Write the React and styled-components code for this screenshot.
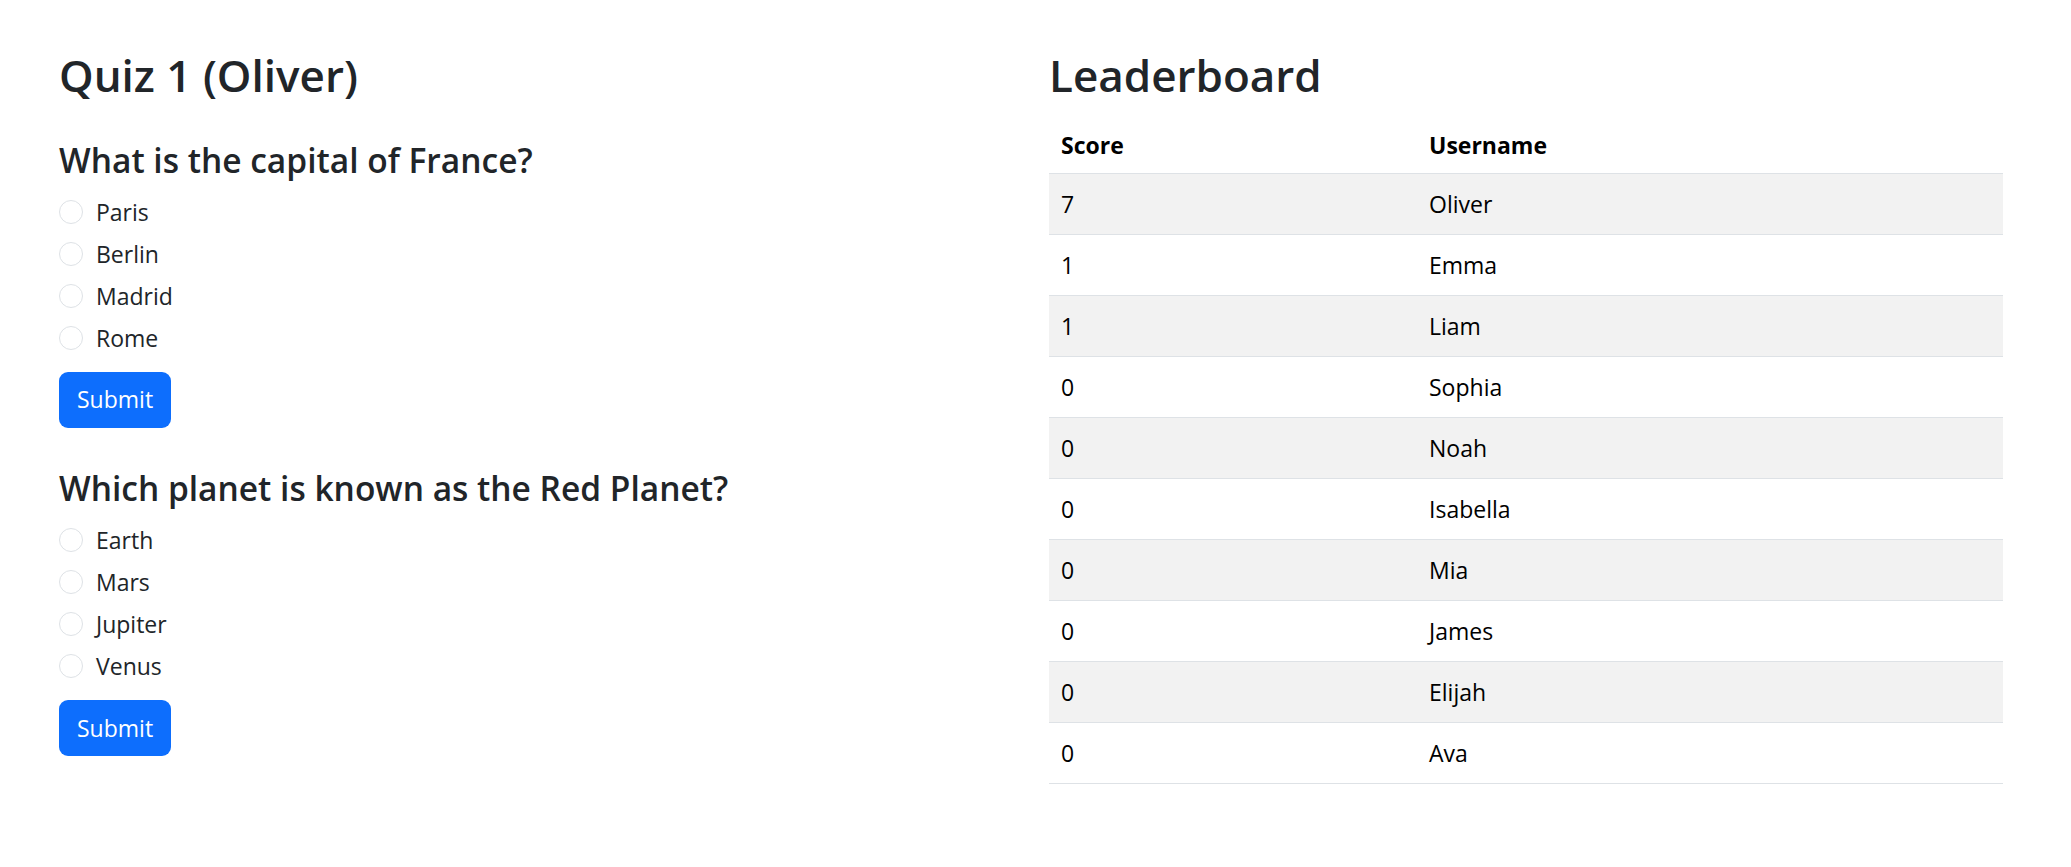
import React from "react";
import styled, { createGlobalStyle } from "styled-components";

const questions = [
  {
    id: 1,
    text: "What is the capital of France?",
    options: ["Paris", "Berlin", "Madrid", "Rome"],
  },
  {
    id: 2,
    text: "Which planet is known as the Red Planet?",
    options: ["Earth", "Mars", "Jupiter", "Venus"],
  },
];

const scores = [
  { score: 7, username: "Oliver" },
  { score: 1, username: "Emma" },
  { score: 1, username: "Liam" },
  { score: 0, username: "Sophia" },
  { score: 0, username: "Noah" },
  { score: 0, username: "Isabella" },
  { score: 0, username: "Mia" },
  { score: 0, username: "James" },
  { score: 0, username: "Elijah" },
  { score: 0, username: "Ava" },
];

const GlobalStyle = createGlobalStyle`
  * { box-sizing: border-box; }
  body {
    margin: 0;
    background: #fff;
    color: #212529;
    font-family: "Open Sans", "Noto Sans", sans-serif;
  }
`;

const Page = styled.div`
  display: grid;
  grid-template-columns: 954px 954px;
  column-gap: 36px;
  align-items: start;
  padding: 49px 0 0 59px;
`;

const Column = styled.div`
  display: flex;
  flex-direction: column;
`;

const Title = styled.h2`
  margin: 0;
  font-size: 44px;
  font-weight: 600;
  line-height: 1.2;
  color: #212529;
`;

const QuestionBlock = styled.form`
  display: flex;
  flex-direction: column;
  align-items: flex-start;
  margin-top: ${(p) => p.$gap}px;
`;

const QuestionText = styled.h4`
  margin: 0;
  font-size: 33.5px;
  font-weight: 600;
  line-height: 1.2;
  color: #212529;
`;

const Options = styled.div`
  display: flex;
  flex-direction: column;
  margin-top: 11px;
`;

const Option = styled.label`
  display: flex;
  align-items: center;
  gap: 13px;
  height: 42px;
  font-size: 23px;
  line-height: 42px;
  color: #212529;
`;

const Radio = styled.input`
  appearance: none;
  width: 24px;
  height: 24px;
  margin: 0;
  border: 1.5px solid #dee2e6;
  border-radius: 50%;
  background: #fff;
`;

const SubmitButton = styled.button`
  margin-top: 13px;
  height: 56px;
  padding: 0 18px;
  border: none;
  border-radius: 9px;
  background: #0d6efd;
  color: #fff;
  font-family: inherit;
  font-size: 23px;
  line-height: 1;
`;

const Table = styled.table`
  width: 100%;
  margin-top: 11px;
  border-collapse: collapse;
  color: #000;
  font-size: 23px;
`;

const Th = styled.th`
  height: 61px;
  padding: 14px 12px 10px;
  text-align: left;
  font-weight: 700;
  line-height: 36px;
  border-bottom: 1px solid #dee2e6;
  width: ${(p) => (p.$w ? `${p.$w}px` : "auto")};
`;

const Row = styled.tr`
  background: ${(p) => (p.$striped ? "#f2f2f2" : "#fff")};
`;

const Td = styled.td`
  height: 61px;
  padding: 12px;
  line-height: 36px;
  border-bottom: 1px solid #dee2e6;
`;

const App = () => {
  return (
    <>
      <GlobalStyle />
      <Page>
        <Column>
          <Title>Quiz 1 (Oliver)</Title>
          {questions.map((q, i) => (
            <QuestionBlock key={q.id} $gap={i === 0 ? 38 : 40} onSubmit={(e) => e.preventDefault()}>
              <QuestionText>{q.text}</QuestionText>
              <Options>
                {q.options.map((opt) => (
                  <Option key={opt}>
                    <Radio type="radio" name={`q${q.id}`} value={opt} />
                    {opt}
                  </Option>
                ))}
              </Options>
              <SubmitButton type="submit">Submit</SubmitButton>
            </QuestionBlock>
          ))}
        </Column>
        <Column>
          <Title>Leaderboard</Title>
          <Table>
            <thead>
              <tr>
                <Th $w={368}>Score</Th>
                <Th>Username</Th>
              </tr>
            </thead>
            <tbody>
              {scores.map((s, i) => (
                <Row key={s.username} $striped={i % 2 === 0}>
                  <Td>{s.score}</Td>
                  <Td>{s.username}</Td>
                </Row>
              ))}
            </tbody>
          </Table>
        </Column>
      </Page>
    </>
  );
};

export default App;
